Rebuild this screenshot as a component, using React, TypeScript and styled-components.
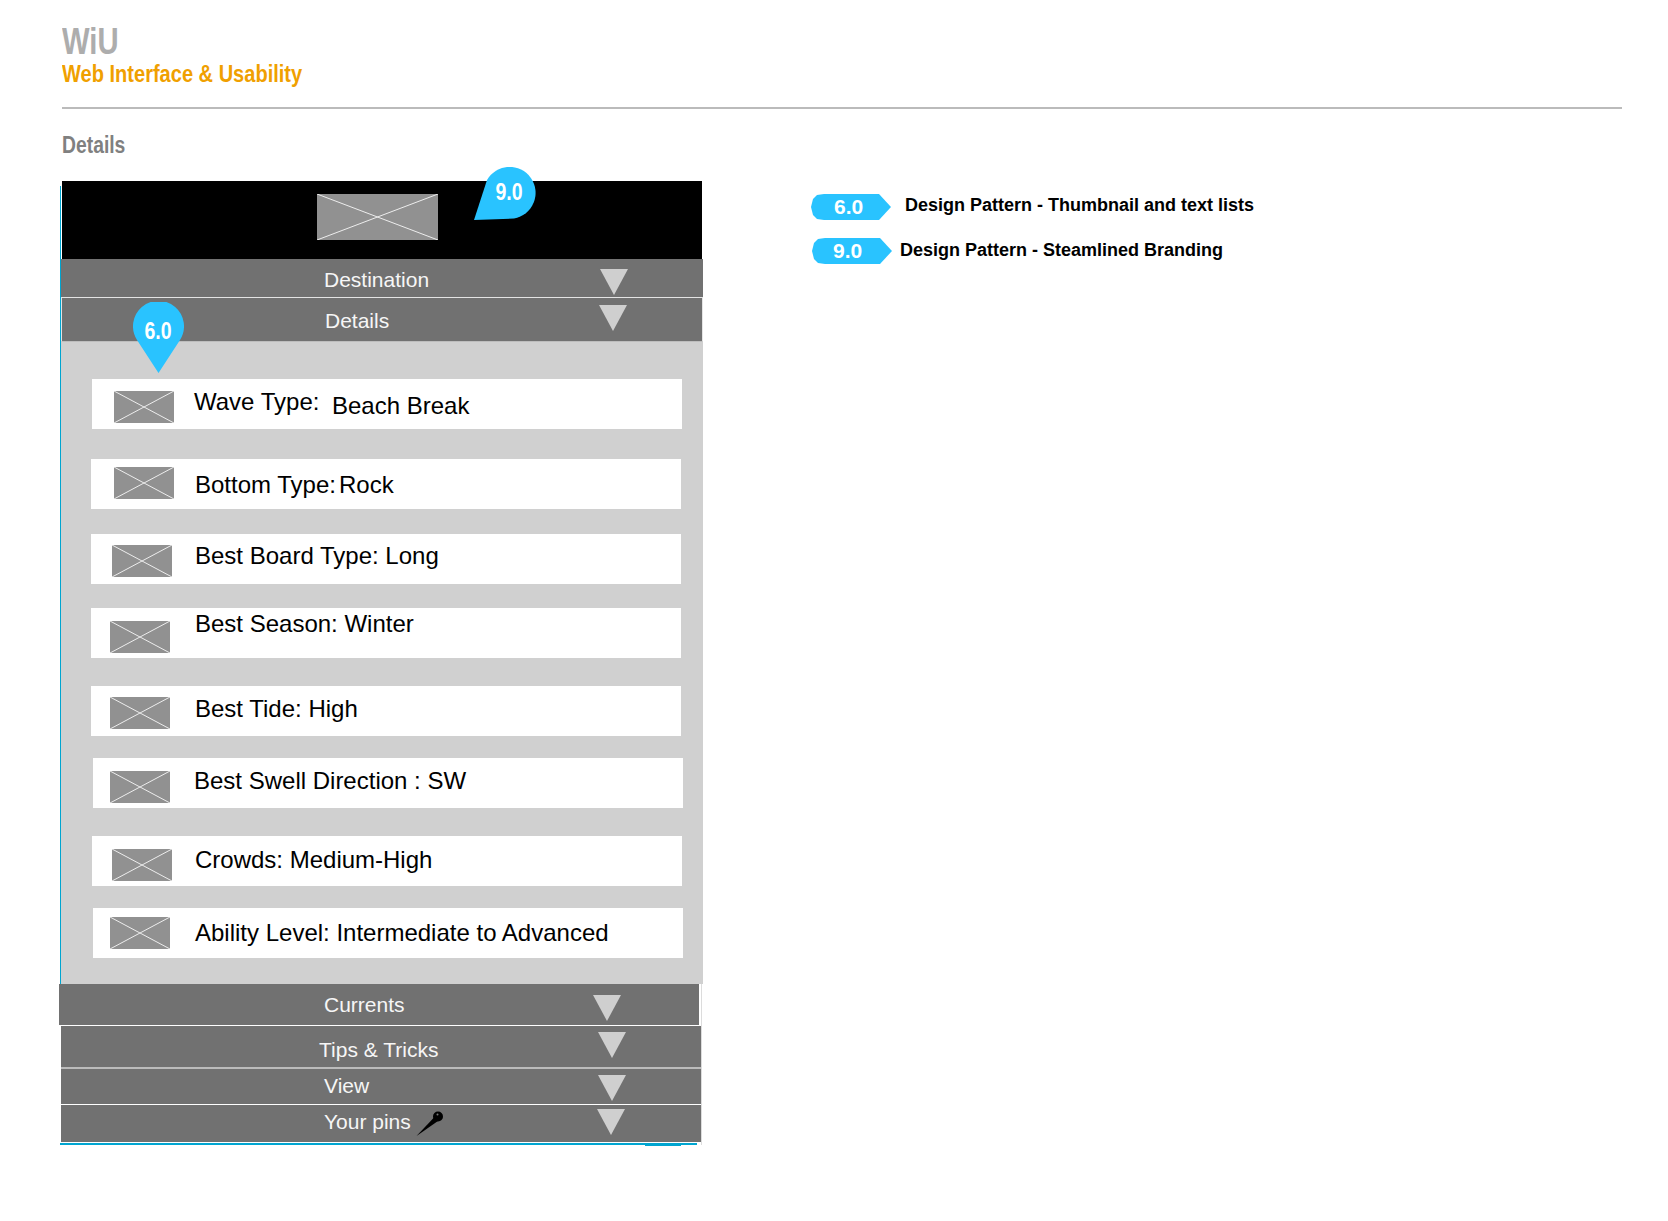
import React from "react";
import styled, { createGlobalStyle } from "styled-components";

const Global = createGlobalStyle`
  html, body { margin: 0; padding: 0; background: #fff; }
  body { font-family: "Liberation Sans", Arial, sans-serif; }
`;

const Page = styled.div`
  width: 1668px;
  height: 1221px;
  box-sizing: border-box;
  padding: 22px 46px 0 62px;
  overflow: hidden;
`;
const Title = styled.h1`
  margin: 0;
  font: bold 37px/40px "Liberation Sans", Arial, sans-serif;
  color: #adadad;
  transform: scaleX(0.79);
  transform-origin: left center;
`;
const Subtitle = styled.h2`
  margin: -2px 0 0;
  font: bold 24px/28px "Liberation Sans", Arial, sans-serif;
  color: #f0a000;
  transform: scaleX(0.835);
  transform-origin: left center;
`;
const Rule = styled.hr`
  margin: 19px 0 0;
  border: 0;
  height: 2px;
  background: #bbbbbb;
`;
const SectionName = styled.h3`
  margin: 22px 0 0;
  font: bold 23px/28px "Liberation Sans", Arial, sans-serif;
  color: #808080;
  transform: scaleX(0.84);
  transform-origin: left center;
`;
const Main = styled.div`
  display: flex;
  margin-top: 22px;
  margin-left: -2px;
`;
const Panel = styled.section`
  position: relative;
  width: 643px;
  flex: none;
  &::before {
    content: "";
    position: absolute;
    left: 0;
    top: 5px;
    width: 1px;
    height: 798px;
    background: #00a5d0;
  }
  &::after {
    content: "";
    position: absolute;
    left: 641px;
    top: 803px;
    width: 1px;
    height: 161px;
    background: #dcdcdc;
  }
`;
const Brand = styled.div`
  height: 78px;
  margin-left: 2px;
  width: 640px;
  background: #000;
  display: flex;
  align-items: flex-start;
  padding: 13px 0 0 255px;
  box-sizing: border-box;
`;
const Bar = styled.div<{ $h: number; $left: number; $width: number; $line?: string; $framed?: boolean }>`
  box-sizing: border-box;
  height: ${(p) => p.$h}px;
  margin-left: ${(p) => p.$left}px;
  width: ${(p) => p.$width}px;
  background: #717171;
  display: flex;
  align-items: flex-start;
  position: relative;
  color: #fff;
  border-bottom: ${(p) => p.$line ?? "0"};
  border-left: ${(p) => (p.$framed ? "1px solid #e4e4e4" : "0")};
  border-right: ${(p) => (p.$framed ? "1px solid #e4e4e4" : "0")};
`;
const BarLabel = styled.div<{ $x: number; $y: number }>`
  margin: ${(p) => p.$y}px 0 0 ${(p) => p.$x}px;
  font: 21px/26px "Liberation Sans", Arial, sans-serif;
  color: #f6f6f6;
  white-space: nowrap;
`;
const Chevron = styled.span<{ $right: number; $y: number }>`
  margin: ${(p) => p.$y}px ${(p) => p.$right}px 0 auto;
  width: 0;
  height: 0;
  border-left: 14.5px solid transparent;
  border-right: 14.5px solid transparent;
  border-top: 26px solid #cfcfcf;
`;
const PinIcon = styled.svg`
  margin: 6px 0 0 5px;
  flex: none;
`;
const Body = styled.div`
  margin-left: 1px;
  width: 642px;
  height: 642px;
  background: #d0d0d0;
  padding-top: 37px;
  box-sizing: border-box;
`;
const Row = styled.div<{ $gap: number; $x: number }>`
  box-sizing: border-box;
  width: 590px;
  height: 50px;
  margin: ${(p) => p.$gap}px 0 0 ${(p) => p.$x}px;
  background: #fff;
  display: flex;
  align-items: flex-start;
`;
const RowThumb = styled.svg<{ $x: number; $y: number }>`
  flex: none;
  margin: ${(p) => p.$y}px 0 0 ${(p) => p.$x}px;
`;
const RowText = styled.div<{ $x: number; $y: number }>`
  font: 24px/30px "Liberation Sans", Arial, sans-serif;
  color: #000;
  white-space: nowrap;
  margin: ${(p) => p.$y}px 0 0 ${(p) => p.$x}px;
`;
const RowValue = styled.div<{ $x: number; $y: number }>`
  font: 24px/30px "Liberation Sans", Arial, sans-serif;
  color: #000;
  white-space: nowrap;
  position: absolute;
  margin: ${(p) => p.$y}px 0 0 ${(p) => p.$x}px;
`;
const BottomLine = styled.div`
  margin: 1px 0 0 0;
  width: 637px;
  height: 2px;
  background: #00a5d0;
`;
const BottomTab = styled.div`
  margin-left: 585px;
  width: 36px;
  height: 1px;
  background: #00a5d0;
`;
const Marker = styled.div<{ $x: number; $y: number; $w: number; $h: number; $tx: number; $ty: number }>`
  position: absolute;
  left: ${(p) => p.$x}px;
  top: ${(p) => p.$y}px;
  width: ${(p) => p.$w}px;
  height: ${(p) => p.$h}px;
  & > svg { position: absolute; inset: 0; }
  & > span {
    position: absolute;
    left: ${(p) => p.$tx}px;
    top: ${(p) => p.$ty}px;
    transform: translate(-50%, -50%) scaleX(0.85);
    font: bold 23px/24px "Liberation Sans", Arial, sans-serif;
    color: #fff;
  }
`;
const Legend = styled.aside`
  margin-left: 108px;
  padding-top: 13px;
  display: flex;
  flex-direction: column;
`;
const LegendRow = styled.div<{ $top: number; $x: number; $gap: number }>`
  display: flex;
  align-items: flex-start;
  margin: ${(p) => p.$top}px 0 0 ${(p) => p.$x}px;
  gap: ${(p) => p.$gap}px;
`;
const Tag = styled.div<{ $pad: number }>`
  width: 80px;
  height: 26px;
  background: #29c3ff;
  clip-path: polygon(68px 0, 80px 13px, 68px 26px, 13px 26px, 6px 25px, 2px 21px, 0 13px, 2px 5px, 6px 1px, 13px 0);
  font: bold 21px/26px "Liberation Sans", Arial, sans-serif;
  color: #fff;
  box-sizing: border-box;
  padding-left: ${(p) => p.$pad}px;
`;
const TagText = styled.div<{ $y: number }>`
  font: bold 18px/22px "Liberation Sans", Arial, sans-serif;
  color: #000;
  white-space: nowrap;
  margin-top: ${(p) => p.$y}px;
`;

const Thumb = ({ w = 60, h = 32, x, y }: { w?: number; h?: number; x: number; y: number }) => (
  <RowThumb $x={x} $y={y} width={w} height={h} viewBox={`0 0 ${w} ${h}`}>
    <rect x="0" y="0" width={w} height={h} fill="#919191" />
    <path d={`M0 0L${w} ${h}M${w} 0L0 ${h}`} stroke="#ededed" strokeWidth="1" fill="none" />
  </RowThumb>
);

const rows = [
  { gap: 0, x: 31, tx: 22, ty: 12, label: "Wave Type:", lx: 20, ly: 8, value: "Beach Break", vx: 240, vy: 12 },
  { gap: 30, x: 30, tx: 23, ty: 8, label: "Bottom Type:", lx: 21, ly: 11, value: "Rock", vx: 248, vy: 11 },
  { gap: 25, x: 30, tx: 21, ty: 11, label: "Best Board Type: Long", lx: 23, ly: 7 },
  { gap: 24, x: 30, tx: 19, ty: 13, label: "Best Season: Winter", lx: 25, ly: 1 },
  { gap: 28, x: 30, tx: 19, ty: 11, label: "Best Tide: High", lx: 25, ly: 8 },
  { gap: 22, x: 32, tx: 17, ty: 13, label: "Best Swell Direction : SW", lx: 24, ly: 8 },
  { gap: 28, x: 31, tx: 20, ty: 13, label: "Crowds: Medium-High", lx: 23, ly: 9 },
  { gap: 22, x: 32, tx: 17, ty: 9, label: "Ability Level: Intermediate to Advanced", lx: 25, ly: 10 },
];

export default function App() {
  return (
    <Page>
      <Global />
      <Title>WiU</Title>
      <Subtitle>Web Interface &amp; Usability</Subtitle>
      <Rule />
      <SectionName>Details</SectionName>
      <Main>
        <Panel>
          <Brand>
            <Thumb w={121} h={46} x={0} y={0} />
          </Brand>
          <Bar $h={39} $left={1} $width={642} $line="1px solid #e4e4e4">
            <BarLabel $x={263} $y={8}>Destination</BarLabel>
            <Chevron $right={75} $y={10} />
          </Bar>
          <Bar $h={44} $left={1} $width={642} $line="1px solid #bdbdbd" $framed>
            <BarLabel $x={263} $y={10}>Details</BarLabel>
            <Chevron $right={75} $y={7} />
          </Bar>
          <Body>
            {rows.map((r) => (
              <Row key={r.label} $gap={r.gap} $x={r.x}>
                <Thumb x={r.tx} y={r.ty} />
                <RowText $x={r.lx} $y={r.ly}>{r.label}</RowText>
                {r.value && <RowValue $x={r.vx} $y={r.vy}>{r.value}</RowValue>}
              </Row>
            ))}
          </Body>
          <Bar $h={42} $left={-1} $width={640} $line="1px solid #fff">
            <BarLabel $x={265} $y={8}>Currents</BarLabel>
            <Chevron $right={78} $y={11} />
          </Bar>
          <Bar $h={43} $left={1} $width={640} $line="2px solid #bbbbbb">
            <BarLabel $x={258} $y={11}>Tips &amp; Tricks</BarLabel>
            <Chevron $right={75} $y={6} />
          </Bar>
          <Bar $h={36} $left={1} $width={640} $line="1px solid #fff">
            <BarLabel $x={263} $y={4}>View</BarLabel>
            <Chevron $right={75} $y={6} />
          </Bar>
          <Bar $h={37} $left={1} $width={640}>
            <BarLabel $x={263} $y={4}>Your pins</BarLabel>
            <PinIcon width="27" height="25" viewBox="0 0 27 25">
              <path d="M0.5 25L18 6.5L22 10Z" fill="#000" />
              <circle cx="22" cy="5.5" r="5" fill="#000" />
              <circle cx="21.5" cy="3.6" r="1" fill="#777" />
            </PinIcon>
            <Chevron $right={76} $y={4} />
          </Bar>
          <BottomLine />
          <BottomTab />
          <Marker $x={73} $y={121} $w={51} $h={71} $tx={25} $ty={29}>
            <svg width="51" height="71" viewBox="0 0 51 71">
              <path d="M25.5 71L4 38A25.5 25.5 0 1 1 47 38Z" fill="#29c3ff" />
            </svg>
            <span>6.0</span>
          </Marker>
          <Marker $x={414} $y={-14} $w={62} $h={53} $tx={35} $ty={25}>
            <svg width="62" height="53" viewBox="0 0 62 53">
              <path d="M0 53L13 13A26 26 0 1 1 40 51.5Z" fill="#29c3ff" />
            </svg>
            <span>9.0</span>
          </Marker>
        </Panel>
        <Legend>
          <LegendRow $top={0} $x={0} $gap={14}>
            <Tag $pad={23}>6.0</Tag>
            <TagText $y={0}>Design Pattern - Thumbnail and text lists</TagText>
          </LegendRow>
          <LegendRow $top={18} $x={1} $gap={8}>
            <Tag $pad={21}>9.0</Tag>
            <TagText $y={1}>Design Pattern - Steamlined Branding</TagText>
          </LegendRow>
        </Legend>
      </Main>
    </Page>
  );
}
